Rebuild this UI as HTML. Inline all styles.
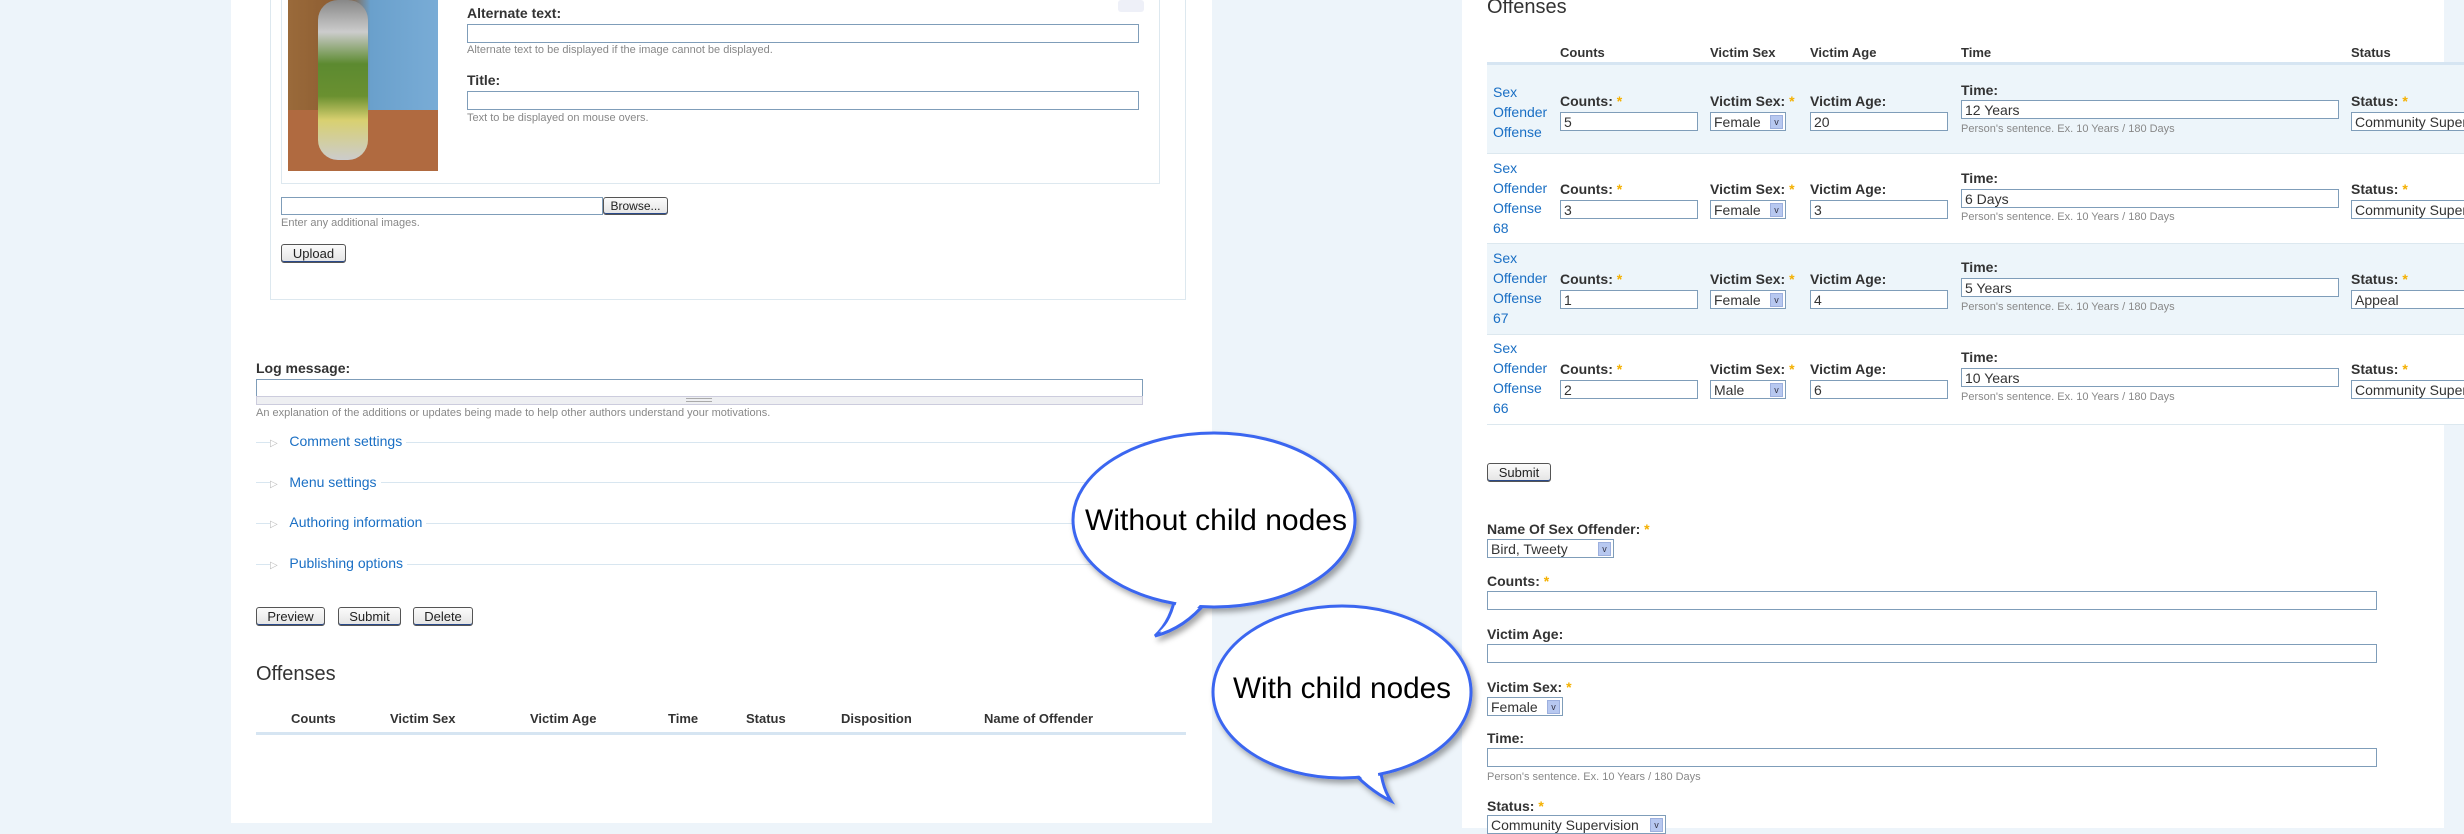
<!DOCTYPE html>
<html><head><meta charset="utf-8"><style>
*{box-sizing:border-box;margin:0;padding:0}
body{width:2464px;height:828px;overflow:hidden;background:#edf4fa;font-family:"Liberation Sans",Verdana,sans-serif;color:#333;position:relative}
.a{position:absolute;white-space:nowrap}
.lbl{font-weight:bold;font-size:14px;color:#333}
.hlp{font-size:11px;color:#888}
.inp{position:absolute;border:1px solid #7f9db9;background:#fff;font-size:14px;padding:1px 3px;color:#333;line-height:16px;white-space:nowrap;overflow:hidden}
.sel{position:absolute;border:1px solid #7f9db9;background:#fff;font-size:14px;padding:1px 3px;color:#333;line-height:16px;white-space:nowrap;overflow:hidden}
.sel i{position:absolute;right:2px;top:2px;width:13px;height:14px;background:#b7c8f0;border:1px solid #9db0de;font-style:normal;font-size:9px;text-align:center;line-height:13px;color:#334}
.btn{position:absolute;border:1px solid #555;border-radius:3px;background:linear-gradient(#fbfbfb,#e4e4e4);font-size:13px;text-align:center;color:#222;box-shadow:inset 0 -1px 0 #2a4a8a}
.lnk{color:#1a6fc4;font-size:14px}
.st{color:#f4b000}
.th{font-weight:bold;font-size:13px;color:#333}
.rl{position:absolute;height:1px;background:#d8e6f0}
</style></head><body>

<!-- left panel -->
<div class="a" style="left:231px;top:0;width:981px;height:823px;background:#fff"></div>
<div class="a" style="left:270px;top:0;width:916px;height:300px;border:1px solid #dde8ef;border-top:none"></div>
<div class="a" style="left:281px;top:0;width:879px;height:184px;border:1px solid #dde8ef;border-top:none"></div>
<div class="a" style="left:1118px;top:0;width:26px;height:12px;background:#eef0f8;border-radius:3px"></div>
<div class="a" style="left:288px;top:0;width:150px;height:171px;background:linear-gradient(90deg,#9a6a3a 0%,#8a5a30 40%,#6aa0cc 55%,#79acd6 100%)"></div>
<div class="a" style="left:288px;top:110px;width:150px;height:61px;background:#b06a40"></div>
<div class="a" style="left:318px;top:0;width:50px;height:160px;background:linear-gradient(#888 0,#ccc 20%,#5c8a30 40%,#6a9030 60%,#d8d070 75%,#ccc 100%);border-radius:20px"></div>

<div class="a lbl" style="left:467px;top:5px">Alternate text:</div>
<div class="inp" style="left:467px;top:24px;width:672px;height:19px"></div>
<div class="a hlp" style="left:467px;top:44px">Alternate text to be displayed if the image cannot be displayed.</div>
<div class="a lbl" style="left:467px;top:72px">Title:</div>
<div class="inp" style="left:467px;top:91px;width:672px;height:19px"></div>
<div class="a hlp" style="left:467px;top:112px">Text to be displayed on mouse overs.</div>

<div class="inp" style="left:281px;top:197px;width:322px;height:18px"></div>
<div class="btn" style="left:603px;top:197px;width:65px;height:18px;font-size:12px;line-height:16px">Browse...</div>
<div class="a hlp" style="left:281px;top:217px">Enter any additional images.</div>
<div class="btn" style="left:281px;top:244px;width:65px;height:19px;line-height:17px">Upload</div>

<div class="a lbl" style="left:256px;top:360px">Log message:</div>
<div class="inp" style="left:256px;top:379px;width:887px;height:22px"></div>
<div class="a" style="left:256px;top:396px;width:887px;height:9px;background:#eeeff2;border:1px solid #ccd"></div>
<div class="a" style="left:686px;top:398px;width:26px;height:4px;border-top:1px solid #aaa;border-bottom:1px solid #aaa"></div>
<div class="a hlp" style="left:256px;top:407px">An explanation of the additions or updates being made to help other authors understand your motivations.</div>

<div class="rl" style="left:256px;top:442px;width:930px"></div>
<div class="a lnk" style="left:270px;top:433px;background:#fff;padding-right:4px"><span style="color:#bbb;font-size:10px">▷</span>&nbsp;&nbsp;&nbsp;Comment settings</div>
<div class="rl" style="left:256px;top:482px;width:930px"></div>
<div class="a lnk" style="left:270px;top:474px;background:#fff;padding-right:4px"><span style="color:#bbb;font-size:10px">▷</span>&nbsp;&nbsp;&nbsp;Menu settings</div>
<div class="rl" style="left:256px;top:523px;width:930px"></div>
<div class="a lnk" style="left:270px;top:514px;background:#fff;padding-right:4px"><span style="color:#bbb;font-size:10px">▷</span>&nbsp;&nbsp;&nbsp;Authoring information</div>
<div class="rl" style="left:256px;top:564px;width:930px"></div>
<div class="a lnk" style="left:270px;top:555px;background:#fff;padding-right:4px"><span style="color:#bbb;font-size:10px">▷</span>&nbsp;&nbsp;&nbsp;Publishing options</div>

<div class="btn" style="left:256px;top:607px;width:69px;height:19px;line-height:17px">Preview</div>
<div class="btn" style="left:338px;top:607px;width:63px;height:19px;line-height:17px">Submit</div>
<div class="btn" style="left:413px;top:607px;width:60px;height:19px;line-height:17px">Delete</div>

<div class="a" style="left:256px;top:663px;font-size:20px;color:#333">Offenses</div>
<div class="a th" style="left:291px;top:711px">Counts</div>
<div class="a th" style="left:390px;top:711px">Victim Sex</div>
<div class="a th" style="left:530px;top:711px">Victim Age</div>
<div class="a th" style="left:668px;top:711px">Time</div>
<div class="a th" style="left:746px;top:711px">Status</div>
<div class="a th" style="left:841px;top:711px">Disposition</div>
<div class="a th" style="left:984px;top:711px">Name of Offender</div>
<div class="a" style="left:256px;top:732px;width:930px;height:3px;background:#d6e5f2"></div>

<!-- right panel -->
<div class="a" style="left:1462px;top:0;width:982px;height:828px;background:#fff"></div>
<div class="a" style="left:1487px;top:-4px;font-size:20px;color:#333">Offenses</div>
<div class="a th" style="left:1560px;top:45px">Counts</div>
<div class="a th" style="left:1710px;top:45px">Victim Sex</div>
<div class="a th" style="left:1810px;top:45px">Victim Age</div>
<div class="a th" style="left:1961px;top:45px">Time</div>
<div class="a th" style="left:2351px;top:45px">Status</div>
<div class="a" style="left:1487px;top:62px;width:977px;height:3px;background:#d6e5f2"></div>

<div class="a" style="left:1487px;top:65px;width:977px;height:89px;background:#edf5fa;border-bottom:1px solid #dce8ef"></div>
<div class="a" style="left:1487px;top:154px;width:977px;height:90px;background:#fff;border-bottom:1px solid #dce8ef"></div>
<div class="a" style="left:1487px;top:244px;width:977px;height:91px;background:#edf5fa;border-bottom:1px solid #dce8ef"></div>
<div class="a" style="left:1487px;top:335px;width:977px;height:90px;background:#fff;border-bottom:1px solid #dce8ef"></div>

<!-- row 1 -->
<div class="a lnk" style="left:1493px;top:82px;line-height:20px;white-space:normal;width:60px">Sex<br>Offender<br>Offense</div>
<div class="a lbl" style="left:1560px;top:93px">Counts: <span class="st">*</span></div>
<div class="inp" style="left:1560px;top:112px;width:138px;height:19px">5</div>
<div class="a lbl" style="left:1710px;top:93px">Victim Sex: <span class="st">*</span></div>
<div class="sel" style="left:1710px;top:112px;width:76px;height:19px">Female<i>v</i></div>
<div class="a lbl" style="left:1810px;top:93px">Victim Age:</div>
<div class="inp" style="left:1810px;top:112px;width:138px;height:19px">20</div>
<div class="a lbl" style="left:1961px;top:82px">Time:</div>
<div class="inp" style="left:1961px;top:100px;width:378px;height:19px">12 Years</div>
<div class="a hlp" style="left:1961px;top:123px">Person's sentence. Ex. 10 Years / 180 Days</div>
<div class="a lbl" style="left:2351px;top:93px">Status: <span class="st">*</span></div>
<div class="sel" style="left:2351px;top:112px;width:140px;height:19px">Community Supervision</div>

<!-- row 2 -->
<div class="a lnk" style="left:1493px;top:158px;line-height:20px;white-space:normal;width:60px">Sex<br>Offender<br>Offense<br>68</div>
<div class="a lbl" style="left:1560px;top:181px">Counts: <span class="st">*</span></div>
<div class="inp" style="left:1560px;top:200px;width:138px;height:19px">3</div>
<div class="a lbl" style="left:1710px;top:181px">Victim Sex: <span class="st">*</span></div>
<div class="sel" style="left:1710px;top:200px;width:76px;height:19px">Female<i>v</i></div>
<div class="a lbl" style="left:1810px;top:181px">Victim Age:</div>
<div class="inp" style="left:1810px;top:200px;width:138px;height:19px">3</div>
<div class="a lbl" style="left:1961px;top:170px">Time:</div>
<div class="inp" style="left:1961px;top:189px;width:378px;height:19px">6 Days</div>
<div class="a hlp" style="left:1961px;top:211px">Person's sentence. Ex. 10 Years / 180 Days</div>
<div class="a lbl" style="left:2351px;top:181px">Status: <span class="st">*</span></div>
<div class="sel" style="left:2351px;top:200px;width:140px;height:19px">Community Supervision</div>

<!-- row 3 -->
<div class="a lnk" style="left:1493px;top:248px;line-height:20px;white-space:normal;width:60px">Sex<br>Offender<br>Offense<br>67</div>
<div class="a lbl" style="left:1560px;top:271px">Counts: <span class="st">*</span></div>
<div class="inp" style="left:1560px;top:290px;width:138px;height:19px">1</div>
<div class="a lbl" style="left:1710px;top:271px">Victim Sex: <span class="st">*</span></div>
<div class="sel" style="left:1710px;top:290px;width:76px;height:19px">Female<i>v</i></div>
<div class="a lbl" style="left:1810px;top:271px">Victim Age:</div>
<div class="inp" style="left:1810px;top:290px;width:138px;height:19px">4</div>
<div class="a lbl" style="left:1961px;top:259px">Time:</div>
<div class="inp" style="left:1961px;top:278px;width:378px;height:19px">5 Years</div>
<div class="a hlp" style="left:1961px;top:301px">Person's sentence. Ex. 10 Years / 180 Days</div>
<div class="a lbl" style="left:2351px;top:271px">Status: <span class="st">*</span></div>
<div class="sel" style="left:2351px;top:290px;width:140px;height:19px">Appeal</div>

<!-- row 4 -->
<div class="a lnk" style="left:1493px;top:338px;line-height:20px;white-space:normal;width:60px">Sex<br>Offender<br>Offense<br>66</div>
<div class="a lbl" style="left:1560px;top:361px">Counts: <span class="st">*</span></div>
<div class="inp" style="left:1560px;top:380px;width:138px;height:19px">2</div>
<div class="a lbl" style="left:1710px;top:361px">Victim Sex: <span class="st">*</span></div>
<div class="sel" style="left:1710px;top:380px;width:76px;height:19px">Male<i>v</i></div>
<div class="a lbl" style="left:1810px;top:361px">Victim Age:</div>
<div class="inp" style="left:1810px;top:380px;width:138px;height:19px">6</div>
<div class="a lbl" style="left:1961px;top:349px">Time:</div>
<div class="inp" style="left:1961px;top:368px;width:378px;height:19px">10 Years</div>
<div class="a hlp" style="left:1961px;top:391px">Person's sentence. Ex. 10 Years / 180 Days</div>
<div class="a lbl" style="left:2351px;top:361px">Status: <span class="st">*</span></div>
<div class="sel" style="left:2351px;top:380px;width:140px;height:19px">Community Supervision</div>

<div class="btn" style="left:1487px;top:463px;width:64px;height:19px;line-height:17px">Submit</div>

<div class="a lbl" style="left:1487px;top:521px">Name Of Sex Offender: <span class="st">*</span></div>
<div class="sel" style="left:1487px;top:539px;width:127px;height:19px">Bird, Tweety<i>v</i></div>
<div class="a lbl" style="left:1487px;top:573px">Counts: <span class="st">*</span></div>
<div class="inp" style="left:1487px;top:591px;width:890px;height:19px"></div>
<div class="a lbl" style="left:1487px;top:626px">Victim Age:</div>
<div class="inp" style="left:1487px;top:644px;width:890px;height:19px"></div>
<div class="a lbl" style="left:1487px;top:679px">Victim Sex: <span class="st">*</span></div>
<div class="sel" style="left:1487px;top:697px;width:76px;height:19px">Female<i>v</i></div>
<div class="a lbl" style="left:1487px;top:730px">Time:</div>
<div class="inp" style="left:1487px;top:748px;width:890px;height:19px"></div>
<div class="a hlp" style="left:1487px;top:771px">Person's sentence. Ex. 10 Years / 180 Days</div>
<div class="a lbl" style="left:1487px;top:798px">Status: <span class="st">*</span></div>
<div class="sel" style="left:1487px;top:815px;width:179px;height:19px">Community Supervision<i>v</i></div>

<!-- bubbles -->
<svg class="a" style="left:0;top:0" width="2464" height="828">
<defs><filter id="sh" x="-20%" y="-20%" width="140%" height="140%"><feDropShadow dx="3" dy="4" stdDeviation="3" flood-color="#000" flood-opacity="0.35"/></filter></defs>
<g filter="url(#sh)">
<path d="M1176 592 Q1172 620 1155 636 Q1185 628 1206 602 Z" fill="#fff" stroke="#3a66f0" stroke-width="3"/>
<ellipse cx="1214" cy="520" rx="141" ry="87" fill="#fff" stroke="#3a66f0" stroke-width="3"/>
<path d="M1178 596 Q1173 620 1159 632 Q1185 624 1204 600 Z" fill="#fff"/>
</g>
<g filter="url(#sh)">
<path d="M1345 764 Q1368 790 1391 801 Q1380 784 1380 758 Z" fill="#fff" stroke="#3a66f0" stroke-width="3"/>
<ellipse cx="1342" cy="692" rx="129" ry="86" fill="#fff" stroke="#3a66f0" stroke-width="3"/>
<path d="M1348 764 Q1368 786 1386 796 Q1377 782 1377 760 Z" fill="#fff"/>
</g>
<text x="1216" y="530" font-family="Liberation Sans, sans-serif" font-size="30" text-anchor="middle" fill="#000" textLength="262" lengthAdjust="spacingAndGlyphs">Without child nodes</text>
<text x="1342" y="698" font-family="Liberation Sans, sans-serif" font-size="30" text-anchor="middle" fill="#000" textLength="218" lengthAdjust="spacingAndGlyphs">With child nodes</text>
</svg>
</body></html>
